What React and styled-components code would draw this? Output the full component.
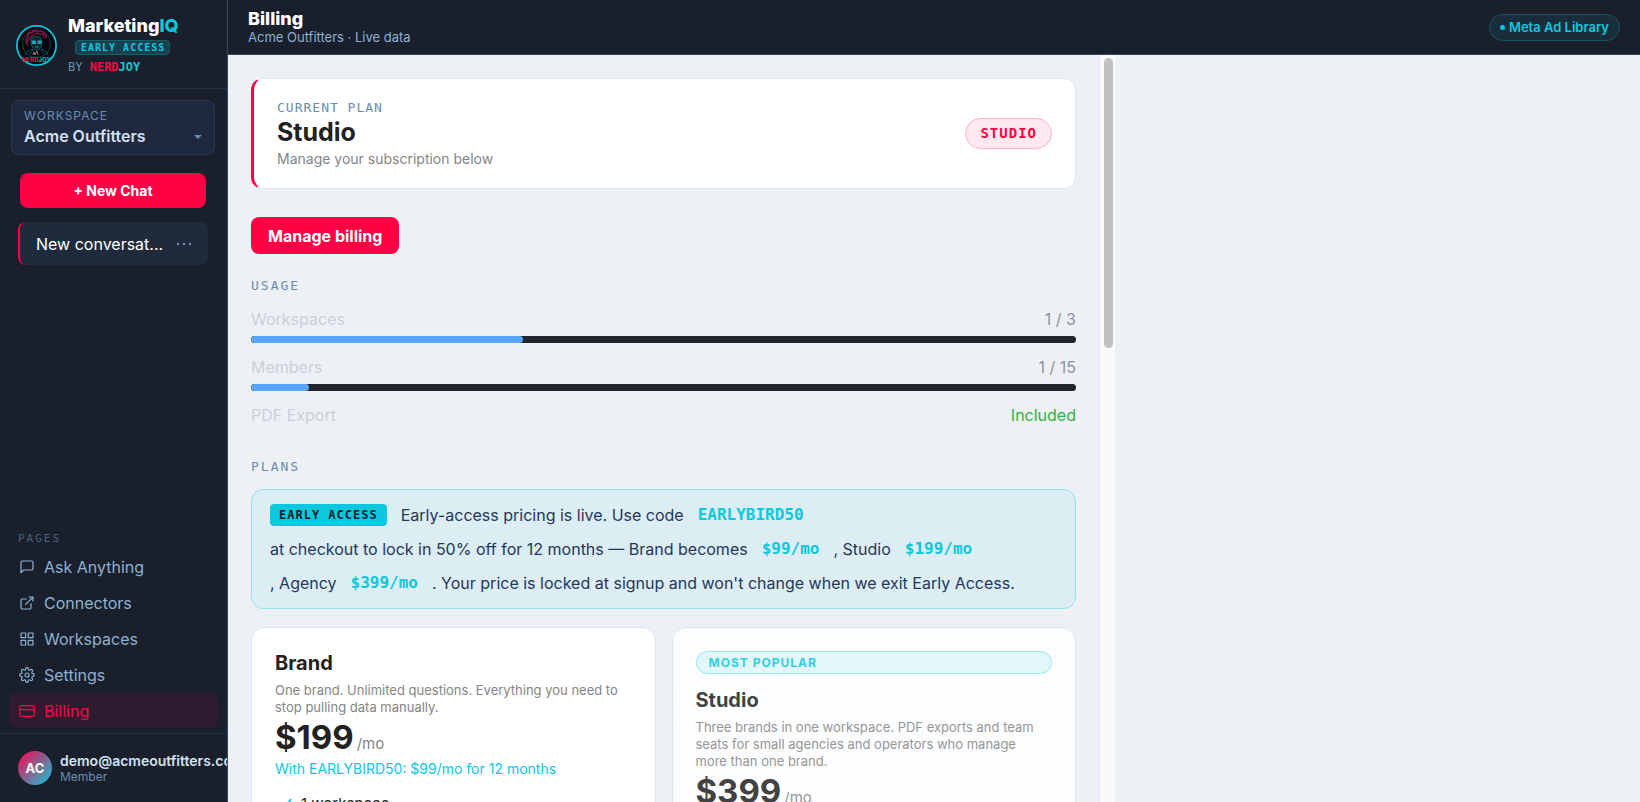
import React from 'react';
import styled, { createGlobalStyle, css } from 'styled-components';

const sans = 'Inter, "Liberation Sans", sans-serif';
const mono = '"DejaVu Sans Mono", "Liberation Mono", monospace';

const c = {
  ink: '#19202c',
  line: '#233047',
  page: '#edf1f6',
  red: '#ff0045',
  cyan: '#0cc8df',
  steel: '#6b8cae',
};

const Global = createGlobalStyle`
  *, *::before, *::after { box-sizing: border-box; }
  body { margin: 0; background: ${c.page}; font-family: ${sans}; color: #222; }
  h1, h2, h3, p, ul, dl, dd { margin: 0; padding: 0; }
  button, select { font-family: inherit; }
`;

const Shell = styled.div`
  display: flex;
  height: 100vh;
  overflow: hidden;
`;

const Sidebar = styled.aside`
  flex: none;
  width: 228px;
  display: flex;
  flex-direction: column;
  overflow: hidden;
  background: ${c.ink};
  border-right: 1px solid #3a4a63;
`;

const Brand = styled.div`
  display: flex;
  align-items: center;
  gap: 11px;
  height: 89px;
  padding: 2px 16px 0;
  border-bottom: 1px solid ${c.line};
`;

const BrandText = styled.div`
  display: flex;
  flex-direction: column;
  align-items: flex-start;
  gap: 4px;
`;

const BrandName = styled.div`
  font-size: 18px;
  line-height: 21px;
  font-weight: 800;
  color: #fff;
  span { color: ${c.cyan}; }
`;

const EarlyTag = styled.span`
  margin-left: 7px;
  padding: 0 4px 0 5px;
  border: 1px solid #14606f;
  border-radius: 4px;
  background: #17404e;
  color: ${c.cyan};
  font: 700 10px/13px ${mono};
  letter-spacing: 1px;
`;

const ByLine = styled.div`
  font: 400 12px/16px ${mono};
  color: ${c.steel};
  b { color: ${c.red}; }
  b + b { color: ${c.cyan}; }
`;

const Workspace = styled.label`
  position: relative;
  display: flex;
  flex-direction: column;
  gap: 2px;
  margin: 11px 12px 18px 11px;
  padding: 7px 12px 8px;
  border: 1px solid #2a3a56;
  border-radius: 8px;
  background: #1e2940;
  color: ${c.steel};
  font-size: 12px;
  line-height: 16px;
  letter-spacing: 1px;
  svg { position: absolute; right: 12px; bottom: 15px; }
`;

const WorkspaceSelect = styled.select`
  appearance: none;
  padding: 0;
  border: 0;
  background: none;
  color: #d3e0f0;
  font-size: 16px;
  line-height: 20px;
  font-weight: 600;
`;

const Button = styled.button`
  flex: none;
  border: 0;
  border-radius: 8px;
  background: ${c.red};
  color: #fff;
  font-weight: 700;
  ${(p) => p.$wide
    ? css`margin: 0 21px 14px 20px; height: 35px; font-size: 14px;`
    : css`align-self: flex-start; margin: 28px 0 23px; padding: 0 17px; height: 37px; font-size: 16px;`}
`;

const Chat = styled.div`
  display: flex;
  align-items: center;
  justify-content: space-between;
  height: 43px;
  margin: 0 19px 0 18px;
  padding: 0 16px 0 16px;
  border-left: 2px solid ${c.red};
  border-radius: 8px;
  background: #1f2a3c;
  color: #fff;
  font-size: 16px;
  button {
    padding: 0;
    border: 0;
    background: none;
    color: ${c.steel};
    display: flex;
  }
`;

const Nav = styled.nav`
  display: flex;
  flex-direction: column;
  gap: 1px;
  margin-top: auto;
  padding: 0 9px 5px;
`;

const NavTitle = styled.div`
  padding: 0 9px 2px;
  font: 400 11px/14px ${mono};
  letter-spacing: 2px;
  color: #4a6080;
`;

const NavLink = styled.a`
  display: flex;
  align-items: center;
  gap: 9px;
  height: 35px;
  padding: 0 10px;
  border-radius: 8px;
  font-size: 16px;
  text-decoration: none;
  color: ${(p) => (p.$active ? c.red : '#8fb0d0')};
  background: ${(p) => (p.$active ? '#301c30' : 'none')};
  svg { flex: none; }
`;

const User = styled.div`
  display: flex;
  align-items: center;
  gap: 8px;
  height: 69px;
  padding: 0 18px;
  border-top: 1px solid ${c.line};
`;

const Avatar = styled.div`
  flex: none;
  width: 34px;
  height: 34px;
  border-radius: 50%;
  display: grid;
  place-items: center;
  background: linear-gradient(135deg, ${c.red}, ${c.cyan});
  color: #fff;
  font-size: 13px;
  font-weight: 700;
`;

const UserText = styled.div`
  white-space: nowrap;
  font-size: 12px;
  line-height: 15px;
  color: ${c.steel};
  strong {
    display: block;
    font-size: 14px;
    line-height: 16px;
    font-weight: 600;
    color: #d3e0f0;
  }
`;

const Main = styled.main`
  flex: 1;
  min-width: 0;
  display: flex;
  flex-direction: column;
`;

const Header = styled.header`
  flex: none;
  display: flex;
  align-items: center;
  justify-content: space-between;
  height: 55px;
  padding: 0 20px;
  background: ${c.ink};
  border-bottom: 1px solid #3a4a63;
  color: #8fb0d0;
  font-size: 13px;
  line-height: 17px;
  h1 { font-size: 18px; line-height: 20px; font-weight: 800; color: #fff; }
`;

const Source = styled.span`
  display: flex;
  align-items: center;
  gap: 4px;
  height: 27px;
  padding: 0 10px;
  border: 1px solid #17545f;
  border-radius: 14px;
  background: #1a2d3c;
  color: ${c.cyan};
  font-size: 13px;
  font-weight: 600;
  &::before {
    content: '';
    width: 5px;
    height: 5px;
    border-radius: 50%;
    background: ${c.cyan};
  }
`;

const Body = styled.div`
  flex: 1;
  min-height: 0;
  display: flex;
`;

const Pane = styled.div`
  flex: 0 1 871px;
  display: flex;
  flex-direction: column;
  padding: 23px 23px 0;
  overflow: hidden;
`;

const ScrollTrack = styled.div`
  flex: none;
  width: 16px;
  padding: 3px 2px 0 4px;
  border-left: 1px solid #e4e6ea;
  background: #fafafa;
  &::before {
    content: '';
    display: block;
    height: 39%;
    border-radius: 5px;
    background: #c1c1c1;
  }
`;

const Current = styled.section`
  flex: none;
  display: flex;
  align-items: center;
  justify-content: space-between;
  padding: 20px 23px;
  border: 1px solid #e0e6ee;
  border-left: 3px solid ${c.red};
  border-radius: 12px;
  background: #fff;
  h2 { font-size: 25px; line-height: 33px; font-weight: 700; }
  p { font-size: 14px; line-height: 19px; color: #858585; }
`;

const Overline = styled.div`
  font: 400 13px/17px ${mono};
  letter-spacing: 1px;
  color: ${c.steel};
`;

const PlanBadge = styled.span`
  padding: 0 14px;
  border: 1px solid #ffb3c7;
  border-radius: 16px;
  background: #ffe9ee;
  color: ${c.red};
  font: 700 14px/29px ${mono};
  letter-spacing: 1px;
`;

const SectionTitle = styled.h2`
  font: 400 13px/18px ${mono};
  letter-spacing: 2px;
  color: ${c.steel};
`;

const Usage = styled.dl`
  display: flex;
  flex-direction: column;
  gap: 13px;
  padding: 13px 0 32px;
`;

const UsageRow = styled.div`
  display: flex;
  flex-wrap: wrap;
  justify-content: space-between;
  row-gap: 6px;
  font-size: 16px;
  line-height: 22px;
  dt { color: #c9d1d9; }
  dd { color: ${(p) => (p.$good ? '#2fb344' : '#8b949e')}; }
`;

const Bar = styled.dd`
  flex: 0 0 100%;
  height: 7px;
  border-radius: 4px;
  overflow: hidden;
  background: #21262d;
  span { display: block; height: 100%; border-radius: 4px; background: #58a6ff; }
`;

const Promo = styled.section`
  flex: none;
  display: flex;
  flex-direction: column;
  gap: 12px;
  margin: 13px 0 18px;
  padding: 14px 18px;
  border: 1px solid #98e2ec;
  border-radius: 12px;
  background: #dcedf4;
  color: #24375c;
  font-size: 16px;
  line-height: 22px;
  code { color: ${c.cyan}; font-family: ${mono}; font-weight: 700; }
  mark {
    padding: 0 9px;
    border-radius: 4px;
    background: ${c.cyan};
    color: #0d1b2a;
    font: 700 12px/22px ${mono};
    letter-spacing: 1px;
  }
`;

const PromoLine = styled.div`
  display: flex;
  gap: 14px;
  white-space: nowrap;
`;

const Plans = styled.section`
  flex: none;
  display: grid;
  grid-template-columns: 1fr 1fr;
  gap: 16px;
`;

const Plan = styled.article`
  display: flex;
  flex-direction: column;
  padding: 23px;
  border: 1px solid #e0e6ee;
  border-radius: 14px;
  background: ${(p) => (p.$dim ? '#fcfdff' : '#fff')};
  h3 { font-size: 20px; line-height: 24px; font-weight: 700; }
  p { margin-top: 7px; padding-right: 6px; font-size: 13px; line-height: 17px; color: #858585; }
  > * { opacity: ${(p) => (p.$dim ? 0.85 : 1)}; }
`;

const Popular = styled.span`
  margin-bottom: 14px;
  padding: 0 12px;
  border: 1px solid #85e3ef;
  border-radius: 12px;
  background: #ddf7fa;
  color: ${c.cyan};
  font-size: 12px;
  line-height: 21px;
  font-weight: 700;
  letter-spacing: 1px;
`;

const Price = styled.div`
  font-size: 33px;
  line-height: 43px;
  font-weight: 700;
  small { margin-left: 3px; font-size: 15px; line-height: 1; font-weight: 400; color: #858585; }
`;

const Deal = styled.div`
  margin-bottom: 15px;
  font-size: 14px;
  line-height: 20px;
  color: ${c.cyan};
`;

const Features = styled.ul`
  display: flex;
  flex-direction: column;
  gap: 8px;
  list-style: none;
  font-size: 15px;
  line-height: 20px;
  li { display: flex; align-items: center; gap: 8px; padding-left: 6px; }
`;

const Logo = () => (
  <svg width="41" height="41" viewBox="0 0 41 41" aria-label="NerdJoy">
    <circle cx="20.5" cy="20.5" r="19.6" fill="#04060b" stroke={c.cyan} strokeWidth="1.7" />
    <circle cx="20.5" cy="18.5" r="14" fill="none" stroke="#0b5561" strokeWidth="0.7" />
    <g fill="none" stroke="#a0104f" strokeWidth="1.3" strokeLinecap="round">
      <path d="M11 17c-2-2-1-5 1-5-1-3 2-5 4-4 1-3 5-3 6-1 3-2 6 0 6 2 2 0 3 2 2 4" />
      <path d="M12 16c0-3 3-2 3-4s3-1 4-3 4 1 6 0 3 2 3 4M12 20c-2-1-2-3 0-4M13 9l-2 1M17 6h3" strokeDasharray="1.6 1" />
    </g>
    <path d="M16 13c2-2 7-2 9 0l1 5c0 4-3 7-5 7s-6-3-6-7z" fill="#07232b" stroke="#12808e" strokeWidth="0.7" />
    <path d="M15.500 15.500h4.500v3.500h-4zM21.500 15.500H26l-.5 3.500h-4z" fill="#16a8ba" />
    <path d="M19 22h4" stroke="#16a8ba" strokeWidth="0.8" />
    <path d="M9 30c1-4 5-5 8-6M32 30c-1-4-4-5-7-6M14 29l3-4M28 29l-3-4" fill="none" stroke="#0d6b77" strokeWidth="0.9" />
    <path d="M17 30l1-3 1 3 2-4 1 4" fill="none" stroke="#c98b9c" strokeWidth="0.8" />
    <text x="20.500" y="37" textAnchor="middle" fontFamily={sans} fontWeight="800" fontSize="6">
      <tspan fill="#e00a50">NERD</tspan><tspan fill="#0fa6b8">JOY</tspan>
    </text>
  </svg>
);

const paths = {
  chat: <path d="M2 3.300c0-.7.5-1.300 1.300-1.300h9.400c.8 0 1.300.6 1.300 1.300v6.400c0 .7-.5 1.300-1.300 1.300H4.700L2 13.700z" />,
  link: <path d="M12 8.700v4c0 .7-.6 1.300-1.300 1.300H3.300c-.7 0-1.300-.6-1.300-1.300V5.300C2 4.600 2.600 4 3.300 4h4M10 2h4v4M6.700 9.300 14 2" />,
  grid: <path d="M2 2h4.700v4.700H2zM9.300 2H14v4.700H9.300zM9.300 9.300H14V14H9.300zM2 9.300h4.700V14H2z" />,
  gear: (
    <>
      <circle cx="8" cy="8" r="2" />
      <path d="M12.900 10a1.100 1.100 0 0 0 .2 1.200l.1.100a1.300 1.300 0 1 1-1.900 1.900l-.1-.1a1.100 1.100 0 0 0-1.900.8v.1a1.300 1.300 0 0 1-2.600 0v-.1A1.100 1.100 0 0 0 6 12.900a1.100 1.100 0 0 0-1.200.2l-.1.100a1.300 1.300 0 1 1-1.900-1.900l.1-.1a1.100 1.100 0 0 0-.8-1.900H2a1.300 1.300 0 0 1 0-2.600h.1A1.100 1.100 0 0 0 3.100 6a1.100 1.100 0 0 0-.2-1.200l-.1-.1a1.300 1.300 0 1 1 1.900-1.900l.1.100a1.100 1.100 0 0 0 1.200.2h.1A1.100 1.100 0 0 0 6.700 2.100V2a1.300 1.300 0 0 1 2.600 0v.1a1.100 1.100 0 0 0 1.900.8l.1-.1a1.300 1.300 0 1 1 1.900 1.900l-.1.1a1.100 1.100 0 0 0-.2 1.200v.1a1.100 1.100 0 0 0 1 .6h.1a1.300 1.300 0 0 1 0 2.600h-.1a1.100 1.100 0 0 0-1 .7z" />
    </>
  ),
  card: <path d="M2 2.700h12c.7 0 1.300.6 1.300 1.300v8c0 .7-.6 1.300-1.300 1.300H2c-.7 0-1.300-.6-1.300-1.300V4c0-.7.6-1.300 1.300-1.300zM.7 6.700h14.600" />,
};

const Icon = ({ name }) => (
  <svg width="16" height="16" viewBox="0 0 16 16" fill="none" stroke="currentColor" strokeWidth="1.200" strokeLinecap="round" strokeLinejoin="round" overflow="visible" aria-hidden="true">
    {paths[name]}
  </svg>
);

const Check = () => (
  <svg width="12" height="12" viewBox="0 0 12 12" fill="none" stroke={c.cyan} strokeWidth="2" aria-hidden="true">
    <path d="M1 7l3 3 6-9" />
  </svg>
);

const pages = [
  ['chat', 'Ask Anything'],
  ['link', 'Connectors'],
  ['grid', 'Workspaces'],
  ['gear', 'Settings'],
  ['card', 'Billing'],
];

const Meter = ({ label, value, percent }) => (
  <UsageRow>
    <dt>{label}</dt>
    <dd>{value}</dd>
    <Bar><span style={{ width: `${percent}%` }} /></Bar>
  </UsageRow>
);

export default function App() {
  return (
    <Shell>
      <Global />
      <Sidebar>
        <Brand>
          <Logo />
          <BrandText>
            <BrandName>Marketing<span>IQ</span></BrandName>
            <EarlyTag>EARLY ACCESS</EarlyTag>
            <ByLine>BY <b>NERD</b><b>JOY</b></ByLine>
          </BrandText>
        </Brand>
        <Workspace>
          WORKSPACE
          <WorkspaceSelect defaultValue="acme">
            <option value="acme">Acme Outfitters</option>
          </WorkspaceSelect>
          <svg width="8" height="4" viewBox="0 0 8 4" aria-hidden="true"><path d="M0 0h8L4 4z" fill={c.steel} /></svg>
        </Workspace>
        <Button $wide>+ New Chat</Button>
        <Chat>
          New conversat...
          <button aria-label="Conversation options">
            <svg width="16" height="4" viewBox="0 0 16 4" fill="currentColor"><circle cx="2" cy="2" r="1.200" /><circle cx="8" cy="2" r="1.200" /><circle cx="14" cy="2" r="1.200" /></svg>
          </button>
        </Chat>
        <Nav>
          <NavTitle>PAGES</NavTitle>
          {pages.map(([icon, label]) => (
            <NavLink key={label} href="#" $active={label === 'Billing'}>
              <Icon name={icon} />
              {label}
            </NavLink>
          ))}
        </Nav>
        <User>
          <Avatar>AC</Avatar>
          <UserText><strong>demo@acmeoutfitters.com</strong>Member</UserText>
        </User>
      </Sidebar>
      <Main>
        <Header>
          <div>
            <h1>Billing</h1>
            Acme Outfitters · Live data
          </div>
          <Source>Meta Ad Library</Source>
        </Header>
        <Body>
          <Pane>
            <Current>
              <div>
                <Overline>CURRENT PLAN</Overline>
                <h2>Studio</h2>
                <p>Manage your subscription below</p>
              </div>
              <PlanBadge>STUDIO</PlanBadge>
            </Current>
            <Button>Manage billing</Button>
            <SectionTitle>USAGE</SectionTitle>
            <Usage>
              <Meter label="Workspaces" value="1 / 3" percent={33} />
              <Meter label="Members" value="1 / 15" percent={7} />
              <UsageRow $good><dt>PDF Export</dt><dd>Included</dd></UsageRow>
            </Usage>
            <SectionTitle>PLANS</SectionTitle>
            <Promo>
              <PromoLine>
                <mark>EARLY ACCESS</mark>
                <span>Early-access pricing is live. Use code</span>
                <code>EARLYBIRD50</code>
              </PromoLine>
              <PromoLine>
                <span>at checkout to lock in 50% off for 12 months — Brand becomes</span>
                <code>$99/mo</code>
                <span>, Studio</span>
                <code>$199/mo</code>
              </PromoLine>
              <PromoLine>
                <span>, Agency</span>
                <code>$399/mo</code>
                <span>. Your price is locked at signup and won't change when we exit Early Access.</span>
              </PromoLine>
            </Promo>
            <Plans>
              <Plan>
                <h3>Brand</h3>
                <p>One brand. Unlimited questions. Everything you need to stop pulling data manually.</p>
                <Price>$199<small>/mo</small></Price>
                <Deal>With EARLYBIRD50: $99/mo for 12 months</Deal>
                <Features><li><Check />1 workspace</li></Features>
              </Plan>
              <Plan $dim>
                <Popular>MOST POPULAR</Popular>
                <h3>Studio</h3>
                <p>Three brands in one workspace. PDF exports and team seats for small agencies and operators who manage more than one brand.</p>
                <Price>$399<small>/mo</small></Price>
              </Plan>
            </Plans>
          </Pane>
          <ScrollTrack />
        </Body>
      </Main>
    </Shell>
  );
}
